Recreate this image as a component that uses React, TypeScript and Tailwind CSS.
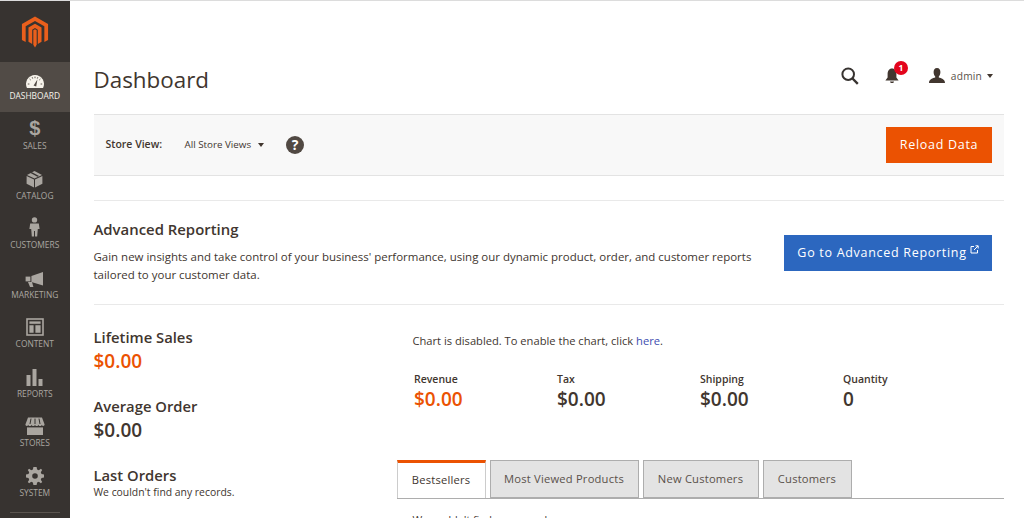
import React from "react";

const ic = "#aaa6a0";

function Logo() {
  return (
    <svg width="28" height="32" viewBox="0 0 30 33" fill="#ea5f1c">
      <path d="M15 0 L29 8 V25 L25 27.3 V10.4 L15 4.6 L5 10.4 V27.3 L1 25 V8 Z" />
      <path d="M15 7.6 L22 11.6 V27 L18 29.3 V14 L15 12.2 L12 14 V29.3 L8 27 V11.6 Z" />
      <path d="M13.2 14.6 L15 13.6 L16.8 14.6 V30.2 L15 33 L13.2 30.2 Z" />
    </svg>
  );
}

const icons: Record<string, React.ReactNode> = {
  DASHBOARD: (
    <svg width="18" height="13" viewBox="0 0 18 13">
      <path d="M0.94 13 A9 9 0 1 1 17.06 13 Z" fill="#f7f3eb" />
      <g stroke="#514943" strokeWidth="0.9">
        <path d="M1.8 9 H3.4M3.6 4 L4.7 5M9 1.6 V3.2M14.4 4 L13.3 5M16.2 9 H14.6M6.2 2.2 L6.7 3.6M11.8 2.2 L11.3 3.6" />
      </g>
      <path d="M7.6 10.6 L11.4 4.4 L10.2 11.4 Z" fill="#514943" />
    </svg>
  ),
  SALES: (
    <span className="text-[20px] leading-[20px] font-bold text-[#aaa6a0]" style={{ fontFamily: "Liberation Sans, sans-serif" }}>$</span>
  ),
  CATALOG: (
    <svg width="17" height="18" viewBox="0 0 17 18" fill={ic}>
      <path d="M8.5 8.6 L1 5 L8.5 1 L16 5 Z" />
      <path d="M0.6 6 L8 9.6 V17.6 L0.6 13.8 Z" />
      <path d="M16.4 6 L9 9.6 V17.6 L16.4 13.8 Z" />
      <path d="M4 2.8 L11.5 6.8 L13 6 L5.6 2 Z" fill="#373330" />
    </svg>
  ),
  CUSTOMERS: (
    <svg width="11" height="20" viewBox="0 0 11 20" fill={ic}>
      <circle cx="5.5" cy="2.9" r="2.7" />
      <path d="M1.2 6.4 H9.8 L10.6 12 H8.8 L8.2 19.6 H6 V14 H5 V19.6 H2.8 L2.2 12 H0.4 Z" />
    </svg>
  ),
  MARKETING: (
    <svg width="19" height="15" viewBox="0 0 19 15" fill={ic}>
      <path d="M18 0 V13.4 L6.4 10 V4 Z" />
      <path d="M0.6 4.6 H5.4 V9.4 H0.6 Z" />
      <path d="M3 10 H7 L8.4 15 H5 Z" />
    </svg>
  ),
  CONTENT: (
    <svg width="18" height="18" viewBox="0 0 18 18" fill="none" stroke={ic}>
      <rect x="1" y="1" width="16" height="16" strokeWidth="1.6" />
      <path d="M3.4 4.6 H14.6" strokeWidth="2.4" />
      <path d="M3.4 7.2 H7.6 V14.8 H3.4 Z M9.4 7.2 H14.6 V14.8 H9.4 Z" fill={ic} stroke="none" />
    </svg>
  ),
  REPORTS: (
    <svg width="17" height="17" viewBox="0 0 17 17" fill={ic}>
      <rect x="0.5" y="6" width="4" height="11" />
      <rect x="6.5" y="0" width="4" height="17" />
      <rect x="12.5" y="10" width="4" height="7" />
    </svg>
  ),
  STORES: (
    <svg width="20" height="18" viewBox="0 0 20 18" fill={ic}>
      <path d="M3 0.4 H17 L19.6 7.6 C19.6 9.4 17 9.4 16.8 7.8 C16.6 9.4 13.6 9.4 13.4 7.8 C13.2 9.4 10.2 9.4 10 7.8 C9.8 9.4 6.8 9.4 6.6 7.8 C6.4 9.4 3.4 9.4 3.2 7.8 C3 9.4 0.4 9.4 0.4 7.6 Z" />
      <path d="M6 1.6 L5 7 M10 1.6 V7 M14 1.6 L15 7" stroke="#373330" strokeWidth="1" />
      <path d="M2 10.4 H18 V18 H2 Z" />
    </svg>
  ),
  SYSTEM: (
    <svg width="18" height="18" viewBox="0 0 18 18" fill={ic}>
      <path fillRule="evenodd" d="M7.4 0 H10.6 L11.1 2.5 L12.8 3.2 L14.9 1.8 L16.2 3.1 L14.8 5.2 L15.5 6.9 L18 7.4 V10.6 L15.5 11.1 L14.8 12.8 L16.2 14.9 L14.9 16.2 L12.8 14.8 L11.1 15.5 L10.6 18 H7.4 L6.9 15.5 L5.2 14.8 L3.1 16.2 L1.8 14.9 L3.2 12.8 L2.5 11.1 L0 10.6 V7.4 L2.5 6.9 L3.2 5.2 L1.8 3.1 L3.1 1.8 L5.2 3.2 L6.9 2.5 Z M9 6.2 A2.8 2.8 0 1 0 9 11.8 A2.8 2.8 0 1 0 9 6.2 Z" />
    </svg>
  ),
};

const navItems = ["DASHBOARD", "SALES", "CATALOG", "CUSTOMERS", "MARKETING", "CONTENT", "REPORTS", "STORES", "SYSTEM"];

function Sidebar() {
  return (
    <aside className="w-[69.5px] h-full shrink-0 bg-[#373330] flex flex-col items-stretch overflow-hidden">
      <div className="h-[61px] shrink-0 flex items-center justify-center pt-[1px]">
        <Logo />
      </div>
      {navItems.map((n, i) => (
        <div
          key={n}
          className={
            "h-[49.5px] shrink-0 flex flex-col items-center justify-end " +
            (i === 0 ? "bg-[#514b46] pb-[11px]" : "pb-[10px]")
          }
        >
          <div className="h-[20px] flex items-end justify-center mb-[3px]">{icons[n]}</div>
          <span className={"text-[8.4px] leading-[10px] " + (i === 0 ? "text-[#f7f3eb]" : "text-[#aaa6a0]")}>{n}</span>
        </div>
      ))}
      <div className="mx-[10px] mt-[4px] h-px bg-[#5a544f] shrink-0" />
    </aside>
  );
}

function Header() {
  return (
    <div className="h-[113px] flex items-center justify-between pt-[45px] pr-[11px]">
      <h1 className="text-[22.4px] leading-[30px] text-[#41362f]">Dashboard</h1>
      <div className="flex items-center pb-[9px]">
        <svg width="18" height="18" viewBox="0 0 18 18" fill="none" stroke="#373330" strokeWidth="2" className="mr-[26px]">
          <circle cx="7.2" cy="7.2" r="5.8" />
          <path d="M11.5 11.5 L16.8 16.8" strokeWidth="2.4" />
        </svg>
        <div className="relative w-[14px] h-[16px] mr-[30px]">
          <svg width="14" height="16" viewBox="0 0 14 16" fill="#41362f">
            <path d="M7 0.5 C10 0.5 11.4 3 11.4 6 V9.6 L13.6 12.6 H0.4 L2.6 9.6 V6 C2.6 3 4 0.5 7 0.5 Z" />
            <path d="M5 13.4 H9 C9 15.6 5 15.6 5 13.4 Z" />
          </svg>
          <span className="absolute left-[9px] top-[-7px] w-[14px] h-[14px] rounded-full bg-[#e3041c] text-white text-[8.5px] leading-[14px] font-bold text-center">1</span>
        </div>
        <svg width="16" height="15" viewBox="0 0 16 15" fill="#41362f" className="mr-[6px]">
          <path d="M8 0 C10.4 0 11.4 1.8 11.4 4 C11.4 6 10.6 7.6 9.8 8.4 V9.6 C12 10.4 16 11 16 15 H0 C0 11 4 10.4 6.2 9.6 V8.4 C5.4 7.6 4.6 6 4.6 4 C4.6 1.8 5.6 0 8 0 Z" />
        </svg>
        <span className="text-[10.2px] leading-[14px] tracking-[0.2px] text-[#5a514a] mr-[5px]">admin</span>
        <span className="w-0 h-0 border-x-[3.5px] border-x-transparent border-t-[4px] border-t-[#41362f]" />
      </div>
    </div>
  );
}

function StoreBar() {
  return (
    <div className="h-[62px] bg-[#f8f8f8] border-y border-[#e3e3e3] flex items-center justify-between pl-[12px] pr-[12px]">
      <div className="flex items-center">
        <span className="text-[10.5px] font-semibold text-[#41362f] w-[79px]">Store View:</span>
        <span className="text-[9.8px] text-[#41362f] mr-[7px]">All Store Views</span>
        <span className="w-0 h-0 border-x-[3.5px] border-x-transparent border-t-[4px] border-t-[#41362f] mr-[22px]" />
        <span className="w-[18px] h-[18px] rounded-full bg-[#514943] text-white text-[14px] leading-[18px] font-bold text-center">?</span>
      </div>
      <button className="w-[106px] h-[36px] bg-[#eb5202] text-white text-[12.5px] tracking-[0.7px]">Reload Data</button>
    </div>
  );
}

function Advanced() {
  return (
    <div className="mt-[24px] border-t border-[#e9e9e9] h-[105px] border-b flex items-center justify-between pr-[12px]">
      <div className="w-[665px] pb-[2px]">
        <h2 className="text-[14.9px] leading-[20px] font-semibold text-[#41362f] mb-[9px]">Advanced Reporting</h2>
        <p className="text-[11.47px] leading-[18px] text-[#41362f]">
          Gain new insights and take control of your business' performance, using our dynamic product, order, and customer reports tailored to your customer data.
        </p>
      </div>
      <button className="w-[208px] h-[36px] bg-[#2c67bf] text-white text-[12.5px] tracking-[0.7px] flex items-start justify-center pt-[9px]">
        <span className="leading-[18px]">Go to Advanced Reporting</span>
        <svg width="9" height="9" viewBox="0 0 9 9" fill="none" stroke="#fff" strokeWidth="1" className="ml-[3px] mt-[1px]">
          <path d="M4 1.5 H1 V8 H7.5 V5" />
          <path d="M4 5 L8 1 M5.5 0.8 H8.2 V3.5" />
        </svg>
      </button>
    </div>
  );
}

function Metric({ label, value, orange }: { label: string; value: string; orange?: boolean }) {
  return (
    <div className="w-[143px]">
      <div className="text-[10.5px] leading-[14px] font-semibold text-[#41362f]">{label}</div>
      <div className={"text-[19px] leading-[26px] font-semibold " + (orange ? "text-[#eb5202]" : "text-[#41362f]")}>{value}</div>
    </div>
  );
}

function Left() {
  return (
    <div className="w-[303px] shrink-0 pt-[22px]">
      <h3 className="text-[14.8px] leading-[20px] mb-px font-semibold text-[#41362f]">Lifetime Sales</h3>
      <div className="text-[19px] leading-[26px] font-semibold text-[#eb5202]">$0.00</div>
      <h3 className="text-[14.8px] leading-[20px] mb-px font-semibold text-[#41362f] mt-[22px]">Average Order</h3>
      <div className="text-[19px] leading-[26px] font-semibold text-[#41362f]">$0.00</div>
      <h3 className="text-[14.8px] leading-[20px] font-semibold text-[#41362f] mt-[22px]">Last Orders</h3>
      <p className="text-[10.4px] leading-[14px] text-[#41362f]">We couldn't find any records.</p>
    </div>
  );
}

function Tab({ label, active, w }: { label: string; active?: boolean; w: number }) {
  return (
    <div
      style={{ width: w }}
      className={
        "h-[38px] shrink-0 flex items-center justify-center text-[11.2px] tracking-[0.2px] border-x " +
        (active
          ? "bg-white border-[#cccccc] border-t-[3px] border-t-[#eb5202] text-[#41362f] font-medium -mb-px relative"
          : "bg-[#e3e3e3] border-t border-b border-[#adadad] text-[#5a514a]")
      }
    >
      {label}
    </div>
  );
}

function Right() {
  return (
    <div className="flex-1 min-w-0 pt-[28px]">
      <p className="pl-[16px] text-[11.15px] leading-[16px] text-[#41362f]">
        Chart is disabled. To enable the chart, click <span className="text-[#3d4db0]">here</span>.
      </p>
      <div className="flex pl-[17.5px] mt-[23px]">
        <Metric label="Revenue" value="$0.00" orange />
        <Metric label="Tax" value="$0.00" />
        <Metric label="Shipping" value="$0.00" />
        <Metric label="Quantity" value="0" />
      </div>
      <div className="mt-[48px] flex gap-[4px] border-b border-[#adadad] w-[607px]">
        <Tab label="Bestsellers" active w={89} />
        <Tab label="Most Viewed Products" w={149} />
        <Tab label="New Customers" w={116} />
        <Tab label="Customers" w={89} />
      </div>
      <p className="pl-[16px] mt-[14px] text-[10.5px] leading-[14px] text-[#41362f]">We couldn't find any records.</p>
    </div>
  );
}

export default function App() {
  return (
    <div className="w-[1024px] h-[518px] overflow-hidden bg-white flex flex-col" style={{ fontFamily: '"Open Sans", sans-serif' }}>
      <div className="h-px bg-[#dcdcdc] shrink-0" />
      <div className="flex flex-1 min-h-0">
        <Sidebar />
        <main className="flex-1 min-w-0 pl-[24px] pr-[20px] overflow-hidden">
          <Header />
          <StoreBar />
          <Advanced />
          <div className="flex">
            <Left />
            <Right />
          </div>
        </main>
      </div>
    </div>
  );
}
